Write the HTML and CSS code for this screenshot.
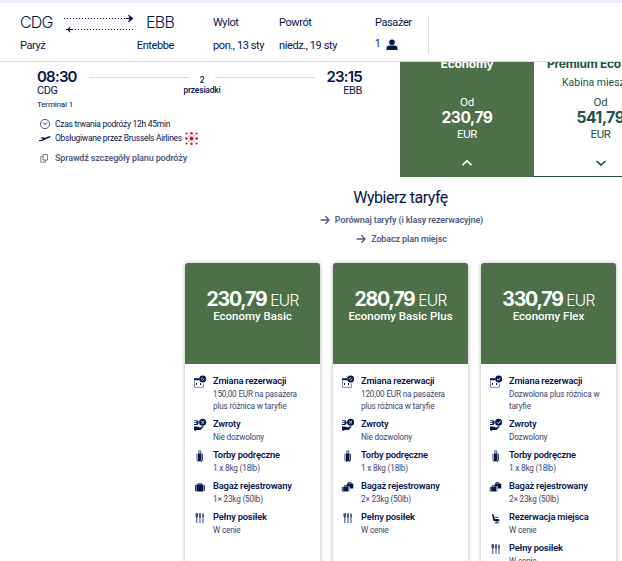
FILE: index.html
```html
<!DOCTYPE html>
<html lang="pl">
<head>
    <meta charset="UTF-8">
    <meta name="viewport" content="width=device-width, initial-scale=1.0">
    <title>Wybierz taryfę</title>
    <link rel="stylesheet" href="styles.css">
</head>
<body>
    <svg class="sprite" xmlns="http://www.w3.org/2000/svg">
        <symbol id="i-nochange" viewBox="0 0 14 14">
            <path d="M1.5 5.5v6.8h9V8.5" fill="none" stroke="currentColor" stroke-width=".7" opacity=".7"/>
            <path d="M1 3.2h5.5v2H1zM3 8h1v2H3zM7 8h1v2H7z" fill="currentColor"/>
            <circle cx="9.7" cy="4" r="3.4" fill="currentColor"/>
            <path d="M8 4.2 9.8 2.5M9.4 5.6l2-1.8" stroke="#fff" stroke-width=".9"/>
        </symbol>
        <symbol id="i-change" viewBox="0 0 14 14">
            <path d="M1.5 5.5v6.8h9V8.5" fill="none" stroke="currentColor" stroke-width=".7" opacity=".7"/>
            <path d="M1 3.2h5.5v2H1zM3 8h1v2H3zM7 8h1v2H7z" fill="currentColor"/>
            <circle cx="9.7" cy="4" r="3.4" fill="currentColor"/>
            <path d="m8 4 1.3 1.3 2.2-2.5" fill="none" stroke="#fff" stroke-width=".9"/>
        </symbol>
        <symbol id="i-norefund" viewBox="0 0 14 14">
            <path d="M1 2.2h3L5.5 3v3L4 7H1v-.9h2.5V5H1v-.8h2.5V3.1H1z" fill="currentColor"/>
            <path d="M1 8.5h3l2 .8h1.800l2.200-1.300.6.800-3 3.200H3.500L2.500 13 1 12z" fill="currentColor"/>
            <circle cx="9.6" cy="4.2" r="3.5" fill="currentColor"/>
            <path d="m8.2 2.8 2.8 2.8m0-2.8L8.2 5.6" stroke="#fff" stroke-width=".8"/>
        </symbol>
        <symbol id="i-refund" viewBox="0 0 14 14">
            <path d="M1 2.2h3L5.5 3v3L4 7H1v-.9h2.5V5H1v-.8h2.5V3.1H1z" fill="currentColor"/>
            <path d="M1 8.5h3l2 .8h1.800l2.200-1.300.6.800-3 3.200H3.500L2.500 13 1 12z" fill="currentColor"/>
            <circle cx="9.6" cy="4.2" r="3.5" fill="currentColor"/>
            <path d="m8 4.2 1.3 1.3 2.2-2.5" fill="none" stroke="#fff" stroke-width=".9"/>
        </symbol>
        <symbol id="i-cabinbag" viewBox="0 0 14 14">
            <path d="M5.8 5V1.8h1.9V5" fill="none" stroke="currentColor" stroke-width=".7"/>
            <path d="M3.6 4.8h.8v7h-.8zM5 4.4h3.5v7.8H5zM9.1 4.8h.8v7h-.8zM4.5 12.2h1v.7h-1zM8 12.2h1v.7H8z" fill="currentColor"/>
        </symbol>
        <symbol id="i-bag" viewBox="0 0 14 14">
            <path d="M4.8 5V3.8h3.8V5" fill="none" stroke="currentColor" stroke-width=".9"/>
            <path d="M2 5h.9v6.2H2.8Q2 11.2 2 10.5zM3.4 4.6h6.7v6.8H3.4zM10.6 4.8q1.2 0 1.2 1v4.5q0 .9-1.2.9z" fill="currentColor"/>
        </symbol>
        <symbol id="i-bags" viewBox="0 0 14 14">
            <path d="M7 4V2.6h3V4M3.3 7V5.6h2.6V7" fill="none" stroke="currentColor" stroke-width=".8"/>
            <path d="M5.8 4.2q0-.8.8-.8h4.8q.9 0 .9.8v4.3H8.8V6.4h-3z" fill="currentColor"/>
            <path d="M.8 7h.9v4.5H.8zM2.2 6.8H7v4.8H2.2zM7.5 7h.8v4.5h-.8z" fill="currentColor"/>
        </symbol>
        <symbol id="i-meal" viewBox="0 0 14 14">
            <path d="M3 2.200v3.200q0 .8.8.8.8 0 .8-.8V2.200M3.800 2.200v9.800M7 6v6M10 5v7" fill="none" stroke="currentColor" stroke-width=".8"/>
            <path d="M6.300 2.200h1.400v4.300H6.300zM9.400 2.200q1.400 0 1.400 2t-1.400 2z" fill="currentColor"/>
        </symbol>
        <symbol id="i-seat" viewBox="0 0 14 14">
            <path d="M3 3.3q1.3-.6 1.7.8L6 8h3.4q.9 0 .9.9v1.3H5.500q-.9 0-1.200-.9z" fill="currentColor"/>
            <path d="M6 6.3h3.5M5.5 11.9h4.7M7.8 10v2" fill="none" stroke="currentColor" stroke-width=".8"/>
        </symbol>
        <symbol id="i-arrow" viewBox="0 0 10 10">
            <path d="M.5 5h8.5M5.3 1.2 9.1 5 5.3 8.8" fill="none" stroke="currentColor" stroke-width="1.3"/>
        </symbol>
    </svg>

    <header class="summary">
        <div class="place">
            <div class="code">CDG</div>
            <div class="label">Paryż</div>
        </div>
        <svg class="route" viewBox="0 0 72 22">
            <path d="M0 5.5h62M11 16.5h59" fill="none" stroke="#05164d" stroke-dasharray="1 2"/>
            <path d="M62 5h7v1h-7zM64 2h1l4 3v1l-4 3h-1l1.500-3V5z" fill="#05164d"/>
            <path d="M2 16h7v1H2zM6.500 13.500 5.500 16v1l1 2.500H6L3.500 17v-1L6 13.500z" fill="#05164d"/>
        </svg>
        <div class="place end">
            <div class="code">EBB</div>
            <div class="label">Entebbe</div>
        </div>
        <div class="date out">
            <div class="label">Wylot</div>
            <div class="label">pon., 13 sty</div>
        </div>
        <div class="date back">
            <div class="label">Powrót</div>
            <div class="label">niedz., 19 sty</div>
        </div>
        <div class="date pax">
            <div class="label">Pasażer</div>
            <div class="count">1
                <svg viewBox="0 0 12 12"><circle cx="6" cy="3.2" r="2.8"/><path d="M.5 11V9q0-2.500 3-2.500h5q3 0 3 2.500v2z"/></svg>
            </div>
        </div>
    </header>

    <section class="flight">
        <div class="info">
            <div class="times">
                <div class="dep"><b>08:30</b><span>CDG</span></div>
                <i></i>
                <div class="stops"><div>2</div><div>przesiadki</div></div>
                <i></i>
                <div class="arr"><b>23:15</b><span>EBB</span></div>
            </div>
            <div class="terminal">Terminal 1</div>
            <div class="detail">
                <svg viewBox="0 0 12 12"><circle cx="6" cy="6" r="4.6" fill="none" stroke="#05164d" stroke-width=".7"/><path d="m4 4.500 2 2 2-2" fill="none" stroke="#05164d"/></svg>
                <span>Czas trwania podróży 12h 45min</span>
            </div>
            <div class="detail">
                <svg viewBox="0 0 12 12"><path d="M0 9h3l8-3.500 1-1.500-3 .4-2.500 1.300-4-.5L1.500 6l2.500.9L2.500 8H0z" fill="#05164d"/></svg>
                <span>Obsługiwane przez Brussels Airlines</span>
                <svg class="dots" viewBox="0 0 13 13" fill="#e4002b">
                    <circle cx="1.500" cy="1.500" r="1"/><circle cx="6.500" cy="1.200" r="1.200"/><circle cx="11.500" cy="1.500" r="1"/>
                    <circle cx="1.300" cy="6.500" r="1.300"/><circle cx="6.500" cy="6.500" r="1.900"/><circle cx="11.700" cy="6.500" r="1.300"/>
                    <circle cx="4" cy="4" r=".6"/><circle cx="9" cy="4" r=".6"/>
                    <circle cx="4" cy="9" r=".6"/><circle cx="9" cy="9" r=".6"/>
                    <circle cx="1.500" cy="11.500" r="1"/><circle cx="6.500" cy="11.800" r="1.200"/><circle cx="11.500" cy="11.500" r="1"/>
                </svg>
            </div>
            <div class="detail link">
                <svg viewBox="0 0 12 12"><path d="M4 2.500h4.500V8H4zM4 4.500H1.800v5.700h4.700V8" fill="none" stroke="currentColor" stroke-width=".8"/></svg>
                <span>Sprawdź szczegóły planu podróży</span>
            </div>
        </div>
        <div class="cabin active">
            <h3>Economy</h3>
            <div class="note"></div>
            <div class="from">Od</div>
            <div class="amount">230,79</div>
            <div class="from">EUR</div>
            <svg viewBox="0 0 12 8"><path d="m1.500 6.200 4.500-4.200 4.500 4.200" fill="none" stroke="currentColor" stroke-width="1.700"/></svg>
        </div>
        <div class="cabin premium">
            <h3>Premium Eco</h3>
            <div class="note">Kabina miesz</div>
            <div class="from">Od</div>
            <div class="amount">541,79</div>
            <div class="from">EUR</div>
            <svg viewBox="0 0 12 8"><path d="m1.500 2 4.500 4.200 4.500-4.200" fill="none" stroke="currentColor" stroke-width="1.700"/></svg>
        </div>
    </section>

    <section class="choose">
        <h2>Wybierz taryfę</h2>
        <a class="compare"><svg><use href="#i-arrow"/></svg>Porównaj taryfy (i klasy rezerwacyjne)</a>
        <a class="seats"><svg><use href="#i-arrow"/></svg>Zobacz plan miejsc</a>
    </section>

    <section class="fares">
        <article class="fare">
            <div class="head">
                <div class="price"><b>230,79</b> EUR</div>
                <div class="name">Economy Basic</div>
            </div>
            <ul>
                <li><svg><use href="#i-nochange"/></svg><div><h4>Zmiana rezerwacji</h4><p>150,00 EUR na pasażera<br>plus różnica w taryfie</p></div></li>
                <li><svg><use href="#i-norefund"/></svg><div><h4>Zwroty</h4><p>Nie dozwolony</p></div></li>
                <li><svg><use href="#i-cabinbag"/></svg><div><h4>Torby podręczne</h4><p>1 x 8kg (18lb)</p></div></li>
                <li><svg><use href="#i-bag"/></svg><div><h4>Bagaż rejestrowany</h4><p>1× 23kg (50lb)</p></div></li>
                <li><svg><use href="#i-meal"/></svg><div><h4>Pełny posiłek</h4><p>W cenie</p></div></li>
            </ul>
        </article>
        <article class="fare">
            <div class="head">
                <div class="price"><b>280,79</b> EUR</div>
                <div class="name">Economy Basic Plus</div>
            </div>
            <ul>
                <li><svg><use href="#i-nochange"/></svg><div><h4>Zmiana rezerwacji</h4><p>120,00 EUR na pasażera<br>plus różnica w taryfie</p></div></li>
                <li><svg><use href="#i-norefund"/></svg><div><h4>Zwroty</h4><p>Nie dozwolony</p></div></li>
                <li><svg><use href="#i-cabinbag"/></svg><div><h4>Torby podręczne</h4><p>1 x 8kg (18lb)</p></div></li>
                <li><svg><use href="#i-bags"/></svg><div><h4>Bagaż rejestrowany</h4><p>2× 23kg (50lb)</p></div></li>
                <li><svg><use href="#i-meal"/></svg><div><h4>Pełny posiłek</h4><p>W cenie</p></div></li>
            </ul>
        </article>
        <article class="fare">
            <div class="head">
                <div class="price"><b>330,79</b> EUR</div>
                <div class="name">Economy Flex</div>
            </div>
            <ul>
                <li><svg><use href="#i-change"/></svg><div><h4>Zmiana rezerwacji</h4><p>Dozwolona plus różnica w<br>taryfie</p></div></li>
                <li><svg><use href="#i-refund"/></svg><div><h4>Zwroty</h4><p>Dozwolony</p></div></li>
                <li><svg><use href="#i-cabinbag"/></svg><div><h4>Torby podręczne</h4><p>1 x 8kg (18lb)</p></div></li>
                <li><svg><use href="#i-bags"/></svg><div><h4>Bagaż rejestrowany</h4><p>2× 23kg (50lb)</p></div></li>
                <li><svg><use href="#i-seat"/></svg><div><h4>Rezerwacja miejsca</h4><p>W cenie</p></div></li>
                <li><svg><use href="#i-meal"/></svg><div><h4>Pełny posiłek</h4><p>W cenie</p></div></li>
            </ul>
        </article>
    </section>
</body>
</html>
```
FILE: styles.css
```css
* {
    box-sizing: border-box;
}
body {
    margin: 0;
    width: 622px;
    height: 561px;
    overflow: hidden;
    background-color: #fff;
    color: #05164d;
    font-family: Roboto, "Liberation Sans", sans-serif;
    white-space: nowrap;
}
h2, h3, h4, p, ul {
    margin: 0;
    padding: 0;
}
.sprite {
    display: none;
}

/* header */
.summary {
    display: flex;
    height: 62px;
    padding: 13px 0 0 20px;
    border-top: 3px solid #eceff9;
    border-bottom: 1px solid #dcdce0;
}
.code {
    margin-top: -1px;
    font-family: Inter, sans-serif;
    font-size: 16px;
    font-weight: 300;
    line-height: 14px;
    letter-spacing: -0.8px;
}
.label {
    font-size: 11px;
    line-height: 14px;
    letter-spacing: -0.4px;
}
.place {
    width: 44px;
}
.place .label {
    margin-top: 10px;
}
.place.end {
    width: 39px;
    padding-right: 1px;
    text-align: right;
}
.route {
    width: 72px;
    height: 22px;
    margin-top: -3px;
}
.date .label + .label {
    margin-top: 9px;
}
.out {
    width: 66px;
    margin-left: 38px;
}
.back {
    width: 96px;
}
.pax {
    width: 54px;
    height: 38px;
    border-right: 1px solid #dcdce6;
}
.count {
    display: flex;
    align-items: center;
    gap: 5px;
    margin-top: 7px;
    font-size: 10px;
    line-height: 14px;
}
.count svg {
    width: 12px;
    height: 12px;
    margin-top: 2px;
    fill: #05164d;
}

/* flight row */
.flight {
    display: flex;
    height: 115px;
    overflow: hidden;
}
.info {
    flex: none;
    width: 362px;
    margin-right: 38px;
    padding: 7px 0 0 37px;
}
.times {
    display: flex;
    height: 29px;
}
.times b {
    display: block;
    font-family: Inter, sans-serif;
    font-size: 15px;
    font-weight: 600;
    line-height: 15px;
    letter-spacing: -0.8px;
}
.times span {
    display: block;
    font-size: 11px;
    line-height: 13px;
    letter-spacing: -0.4px;
}
.times i {
    flex: 1;
    height: 1px;
    margin-top: 8px;
    background-color: #d8dade;
}
.dep {
    width: 52px;
}
.arr {
    width: 47px;
    text-align: right;
}
.stops {
    width: 26px;
    display: flex;
    flex-direction: column;
    align-items: center;
    padding-top: 6px;
    font-size: 8.5px;
    font-weight: 500;
    line-height: 10px;
    letter-spacing: -0.2px;
}
.terminal {
    height: 19px;
    font-size: 8px;
    line-height: 13px;
    letter-spacing: -0.15px;
}
.detail {
    display: flex;
    align-items: center;
    height: 14px;
    padding-left: 2px;
    font-size: 8.5px;
    letter-spacing: -0.28px;
}
.detail svg {
    width: 12px;
    height: 12px;
    margin-right: 4px;
}
.detail .dots {
    width: 13px;
    height: 13px;
    margin: 0 0 0 3px;
}
.detail.link {
    height: 25px;
    color: #505e7e;
    font-size: 9px;
    font-weight: 600;
    letter-spacing: -0.15px;
}

.cabin {
    flex: none;
    width: 134px;
    height: 115px;
    overflow: hidden;
    border-bottom: 1px solid #1f4b43;
    color: #245049;
    text-align: center;
}
.cabin.active {
    background-color: #4d7049;
    border-color: #4d7049;
    color: #fff;
}
.cabin h3 {
    margin-top: -6px;
    font-family: Inter, sans-serif;
    font-size: 12px;
    font-weight: 700;
    line-height: 16px;
    letter-spacing: -0.25px;
}
.cabin .note {
    height: 23px;
    font-size: 10.5px;
    line-height: 22px;
}
.premium h3 {
    padding-left: 13px;
    text-align: left;
}
.premium .note {
    padding-left: 28px;
    text-align: left;
}
.cabin .from {
    font-size: 11.5px;
    line-height: 14px;
    letter-spacing: -0.3px;
}
.cabin .amount {
    font-family: Inter, sans-serif;
    font-size: 15.5px;
    font-weight: 700;
    line-height: 18px;
    letter-spacing: -0.4px;
}
.cabin svg {
    width: 12px;
    height: 8px;
    margin-top: 18px;
}
.premium .from, .premium .amount, .premium svg {
    margin-left: -1px;
}

/* fare choice */
.choose {
    display: flex;
    flex-direction: column;
    align-items: center;
    height: 86px;
    padding: 10px 0 0 181px;
}
.choose h2 {
    margin-left: -2px;
    font-size: 16px;
    font-weight: 400;
    line-height: 21px;
    letter-spacing: -0.5px;
}
.choose a {
    display: flex;
    align-items: center;
    height: 19px;
    color: #505e7e;
    font-size: 9px;
    font-weight: 600;
    letter-spacing: -0.13px;
}
.choose .compare {
    margin-top: 2px;
}
.choose a svg {
    width: 10px;
    height: 10px;
    margin-right: 5px;
}
.fares {
    display: grid;
    grid-template-columns: repeat(3, 135px);
    column-gap: 13px;
    padding-left: 185px;
}
.fare {
    height: 320px;
    border-radius: 3px;
    box-shadow: 0 0 4px rgba(0, 0, 0, 0.3);
}
.head {
    height: 101px;
    padding-top: 26px;
    border-radius: 3px 3px 0 0;
    background-color: #4d7049;
    color: #fff;
    text-align: center;
}
.price {
    font-family: Inter, sans-serif;
    font-size: 15.5px;
    font-weight: 300;
    line-height: 20px;
    letter-spacing: -0.7px;
}
.price b {
    font-size: 19.5px;
    font-weight: 700;
    letter-spacing: -1.2px;
}
.name {
    margin-top: -2px;
    font-size: 11.5px;
    font-weight: 500;
    line-height: 14px;
}
.fare ul {
    padding: 11px 0 0 8px;
    list-style: none;
}
.fare li {
    display: flex;
    margin-bottom: 6px;
}
.fare li svg {
    flex: none;
    width: 14px;
    height: 14px;
    margin-right: 6px;
}
.fare h4 {
    font-size: 9.3px;
    font-weight: 600;
    line-height: 12px;
    letter-spacing: -0.18px;
}
.fare p {
    padding-top: 1px;
    color: #3b4670;
    font-size: 8.2px;
    line-height: 12px;
    letter-spacing: -0.18px;
}
```
